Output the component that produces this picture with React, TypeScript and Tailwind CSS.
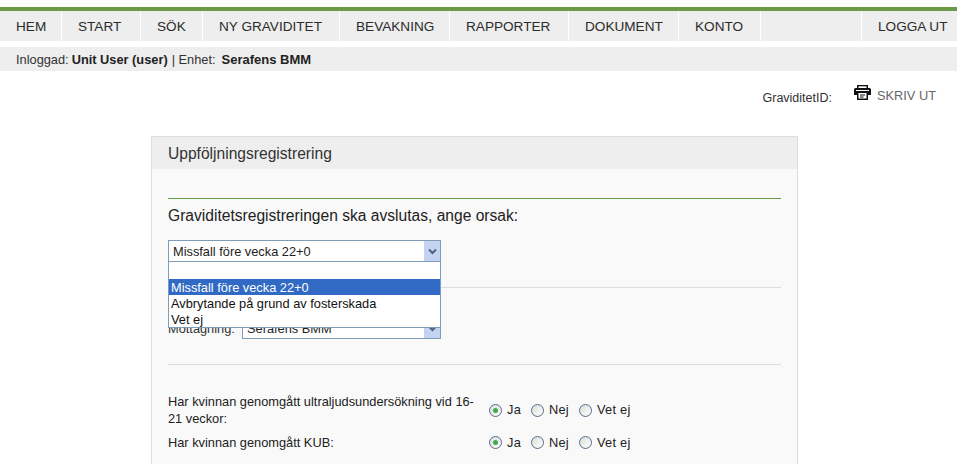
import React from "react";

const navItems = [
  { label: "HEM", width: "w-[62px]" },
  { label: "START", width: "w-[79px]" },
  { label: "SÖK", width: "w-[62px]" },
  { label: "NY GRAVIDITET", width: "w-[137px]" },
  { label: "BEVAKNING", width: "w-[110px]" },
  { label: "RAPPORTER", width: "w-[119px]" },
  { label: "DOKUMENT", width: "w-[110px]" },
  { label: "KONTO", width: "w-[82px]" },
];

// Old XP style radio button
function Radio({ checked, label }: { checked?: boolean; label: string }) {
  return (
    <span className="flex items-center gap-[5px]">
      <span className="flex h-[13px] w-[13px] items-center justify-center rounded-full border border-[#4f6f8f] bg-gradient-to-br from-[#dcdcd7] to-white">
        {checked && <span className="h-[5px] w-[5px] rounded-full bg-[#45a84f]" />}
      </span>
      <span className="tracking-[0.25px]">{label}</span>
    </span>
  );
}

function RadioRow({ label, className }: { label: React.ReactNode; className?: string }) {
  return (
    <div className={"flex items-center " + (className ?? "")}>
      <div className="w-[321px] leading-[17px]">{label}</div>
      <div className="flex gap-[10px]">
        <Radio checked label="Ja" />
        <Radio label="Nej" />
        <Radio label="Vet ej" />
      </div>
    </div>
  );
}

function Chevron() {
  return (
    <span className="flex h-full w-[16px] items-center justify-center bg-[#c3d3f1]">
      <svg width="9" height="7" viewBox="0 0 9 7" fill="none">
        <path d="M1 1.500L4.500 5L8 1.500" stroke="#4d6185" strokeWidth="2" />
      </svg>
    </span>
  );
}

function PrintIcon() {
  return (
    <svg width="17" height="15" viewBox="0 0 17 15">
      <path d="M3 0h11v3h1.500A1.500 1.500 0 0 1 17 4.500V10h-3v5H3v-5H0V4.500A1.500 1.500 0 0 1 1.500 3H3V0z" fill="#111" />
      <path d="M4.500 1.300h8V3h-8z" fill="#fff" />
      <path d="M2 5h13v1H2zM4.500 8h8v5.500h-8z" fill="#fff" />
      <path d="M6 9.500h5v1H6zM6 11.500h3.500v1H6z" fill="#111" />
    </svg>
  );
}

export default function App() {
  return (
    <div className="h-[464px] w-[957px] overflow-hidden bg-white pt-[7px] font-['Liberation_Sans',Arial,sans-serif] text-[12.8px] text-[#222]">
      {/* Top menu */}
      <div className="flex h-[34px] border-t-4 border-[#6a9a45] bg-[#eeeeee] text-[13.6px] leading-[31px] whitespace-nowrap text-[#2b2b2b]">
        {navItems.map((item) => (
          <div key={item.label} className={"border-r border-white pl-[16px] " + item.width}>
            {item.label}
          </div>
        ))}
        <div className="w-[101px] border-r border-white" />
        <div className="pl-[16px]">LOGGA UT</div>
      </div>

      {/* Logged in bar */}
      <div className="mt-[6px] flex h-[24px] items-center bg-[#eeeeee] px-[16px] pt-[2px] leading-[22px] whitespace-nowrap text-[#333]">
        <span>Inloggad:</span>
        <b className="ml-[3px] text-[#222]">Unit User (user)</b>
        <span className="ml-[4px]">| Enhet:</span>
        <b className="ml-[6px] text-[13px] text-[#222]">Serafens BMM</b>
      </div>

      {/* Page tools */}
      <div className="flex h-[65px] justify-end pr-[21px] pt-[14px] whitespace-nowrap">
        <span className="mr-[22px] mt-[4px] text-[12.5px] text-[#333]">GraviditetID:</span>
        <span className="mr-[6px]">
          <PrintIcon />
        </span>
        <span className="mt-[1px] text-[#666]">SKRIV UT</span>
      </div>

      {/* Form panel */}
      <div className="ml-[151px] h-[400px] w-[647px] border border-[#dddddd] bg-[#f9f9f9]">
        <div className="h-[32px] bg-[#eeeeee] px-[16px] text-[15.6px] leading-[33px] text-[#333]">Uppföljningsregistrering</div>

        <div className="px-[16px]">
          <div className="mt-[29px] border-t border-[#6a9a45]" />
          <h2 className="mt-[7px] text-[15.6px] leading-[20px] text-[#222]">Graviditetsregistreringen ska avslutas, ange orsak:</h2>

          {/* Open dropdown */}
          <div className="relative mt-[14px] h-[22px] w-[273px]">
            <div className="flex h-[22px] items-center justify-between border border-[#7f9db9] bg-white pl-[4px] text-[#222]">
              <span className="pt-[2px]">Missfall före vecka 22+0</span>
              <Chevron />
            </div>
            <div className="absolute left-0 top-[22px] z-10 w-[273px] border border-t-0 border-[#7f9db9] bg-white pt-[17px] leading-[17px] text-[#111]">
              <div className="h-[16px] bg-[#316ac5] pl-[2px] text-white">Missfall före vecka 22+0</div>
              <div className="h-[16px] pl-[2px]">Avbrytande på grund av fosterskada</div>
              <div className="h-[16px] pl-[2px]">Vet ej</div>
            </div>
          </div>

          <div className="mt-[25px] border-t border-[#dddddd]" />

          {/* Clinic row, mostly behind the dropdown */}
          <div className="mt-[30px] flex h-[21px] items-center">
            <span className="w-[74px] text-[#333]">Mottagning:</span>
            <div className="flex h-[21px] w-[199px] items-center justify-between border border-[#7f9db9] bg-white pl-[4px]">
              <span>Serafens BMM</span>
              <Chevron />
            </div>
          </div>

          <div className="mt-[25px] border-t border-[#dddddd]" />

          <RadioRow className="mt-[28px]" label={<>Har kvinnan genomgått ultraljudsundersökning vid 16-<br />21 veckor:</>} />
          <RadioRow className="mt-[6px]" label="Har kvinnan genomgått KUB:" />
          <RadioRow className="mt-[12px]" label="Har kvinnan genomgått fostervattenprov:" />
        </div>
      </div>
    </div>
  );
}
